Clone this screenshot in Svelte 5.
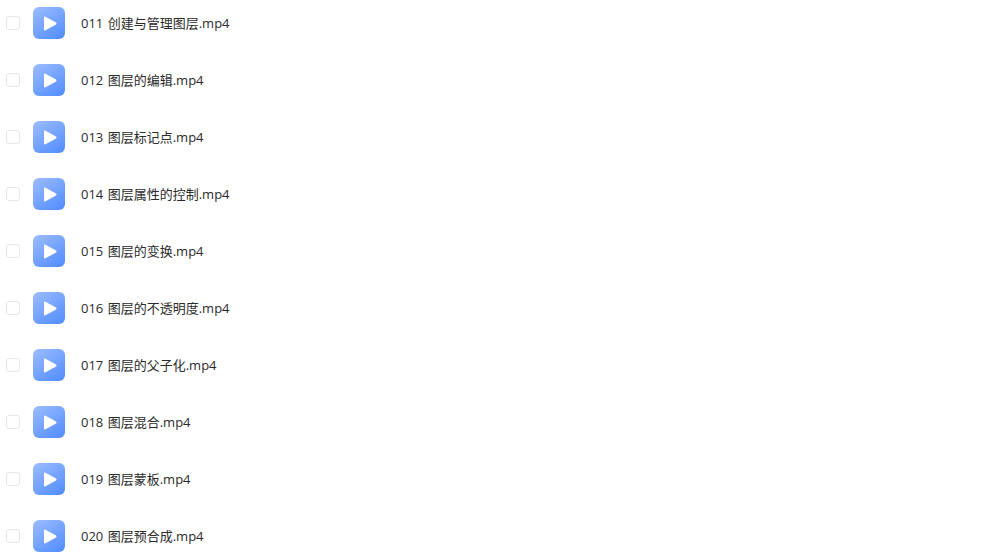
<script lang="ts">
	const files = [
		'011 创建与管理图层.mp4',
		'012 图层的编辑.mp4',
		'013 图层标记点.mp4',
		'014 图层属性的控制.mp4',
		'015 图层的变换.mp4',
		'016 图层的不透明度.mp4',
		'017 图层的父子化.mp4',
		'018 图层混合.mp4',
		'019 图层蒙板.mp4',
		'020 图层预合成.mp4'
	];
</script>

<ul class="file-list">
	{#each files as name (name)}
		<li class="file-row">
			<span class="check"></span>
			<span class="thumb">
				<svg width="13" height="15" viewBox="0 0 14 16">
					<path d="M1.6 0.6 L13 7 Q14 8 13 9 L1.6 15.4 Q0 16 0 14.4 V1.6 Q0 0 1.6 0.6 Z" fill="#fff" />
				</svg>
			</span>
			<span class="name">{name}</span>
		</li>
	{/each}
</ul>

<style>
	:global(body) {
		background: #fff;
		overflow: hidden;
	}

	.file-list {
		list-style: none;
		margin: 0;
		padding: 7px 0 0 6px;
		display: flex;
		flex-direction: column;
		gap: 25px;
	}

	.file-row {
		display: flex;
		align-items: center;
		height: 32px;
	}

	.check {
		width: 14px;
		height: 14px;
		box-sizing: border-box;
		border: 1px solid #e6e6e6;
		border-radius: 3px;
		background: #fff;
		margin-right: 13px;
	}

	.thumb {
		width: 32px;
		height: 32px;
		border-radius: 6px;
		background: linear-gradient(145deg, #9dbdff 0%, #4f8bff 100%);
		display: flex;
		align-items: center;
		justify-content: center;
		margin-right: 16px;
		padding-left: 2px;
		box-sizing: border-box;
	}

	.name {
		font-family: "Open Sans", "Noto Sans CJK SC", sans-serif;
		font-size: 13px;
		line-height: 18px;
		word-spacing: 1px;
		color: #2b2b2b;
	}
</style>
